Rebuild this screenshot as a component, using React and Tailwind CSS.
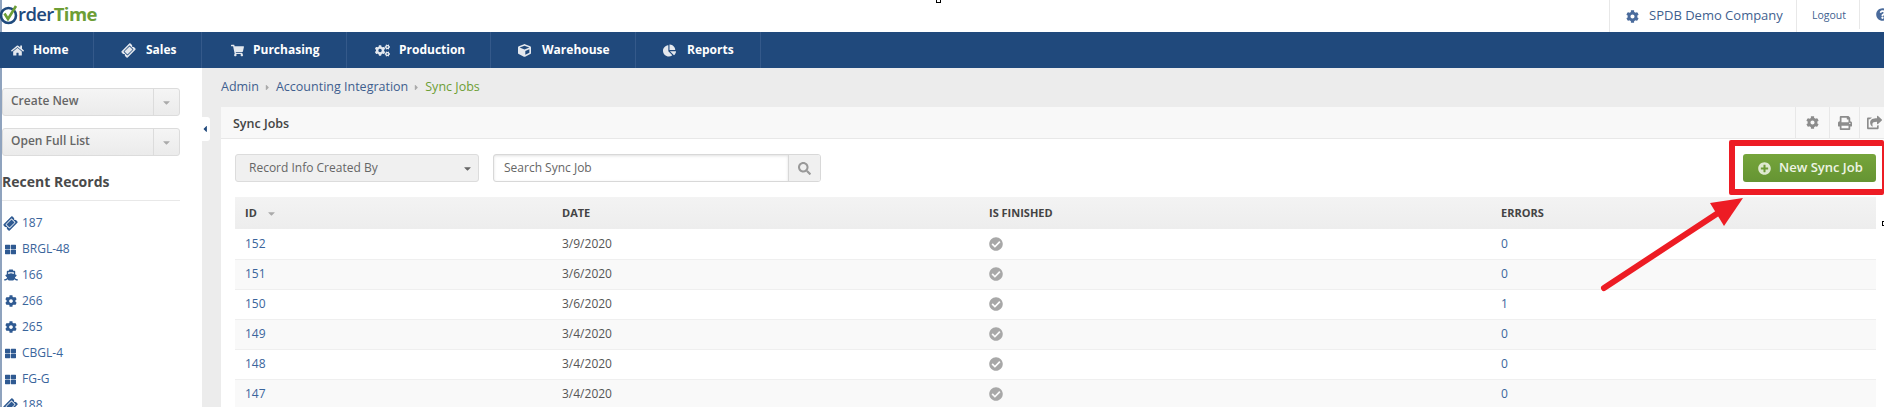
import {
  FaHome, FaTicketAlt, FaShoppingCart, FaCogs, FaCube, FaChartPie, FaCog, FaPrint,
  FaShareSquare, FaSearch, FaPlusCircle, FaCheckCircle, FaShip, FaThLarge, FaQuestionCircle,
  FaCaretDown, FaCaretRight, FaCaretLeft,
} from "react-icons/fa";

const TiltedTicket = ({ className }) => <FaTicketAlt size={13} className={`-rotate-45 ${className}`} />;
const Grid = ({ className }) => <FaThLarge size={11} className={className} />;
const Ship = ({ className }) => <FaShip size={14} className={className} />;

const NAV = [
  { label: "Home", icon: FaHome, size: 13, width: "w-[94px]", pad: "pl-[11px]", gap: "gap-[9px]" },
  { label: "Sales", icon: FaTicketAlt, size: 13, tilt: true, width: "w-[108px]", pad: "pl-[28px]", gap: "gap-[11px]" },
  { label: "Purchasing", icon: FaShoppingCart, size: 13, width: "w-[145px]", pad: "pl-[29px]", gap: "gap-[9px]" },
  { label: "Production", icon: FaCogs, size: 15, width: "w-[144px]", pad: "pl-[28px]", gap: "gap-[9px]" },
  { label: "Warehouse", icon: FaCube, size: 13, width: "w-[145px]", pad: "pl-[27px]", gap: "gap-[11px]" },
  { label: "Reports", icon: FaChartPie, size: 13, width: "w-[125px]", pad: "pl-[27px]", gap: "gap-[11px]" },
];

const RECENT = [
  { label: "187", icon: TiltedTicket },
  { label: "BRGL-48", icon: Grid },
  { label: "166", icon: Ship },
  { label: "266", icon: FaCog },
  { label: "265", icon: FaCog },
  { label: "CBGL-4", icon: Grid },
  { label: "FG-G", icon: Grid },
  { label: "188", icon: TiltedTicket },
];

const JOBS = [
  { id: 152, date: "3/9/2020", errors: 0 },
  { id: 151, date: "3/6/2020", errors: 0 },
  { id: 150, date: "3/6/2020", errors: 1 },
  { id: 149, date: "3/4/2020", errors: 0 },
  { id: 148, date: "3/4/2020", errors: 0 },
  { id: 147, date: "3/4/2020", errors: 0 },
];

const SideButton = ({ label }) => (
  <div className="flex h-7 w-[178px] items-center rounded-[3px] border border-[#dcdcdc] bg-gradient-to-b from-[#f5f5f5] to-[#ebebeb]">
    <span className="flex-1 pb-[2px] pl-2 text-[12px] font-semibold text-[#666]">{label}</span>
    <span className="flex h-full w-[26px] items-center justify-center border-l border-[#dcdcdc] text-[#aaa]">
      <FaCaretDown size={11} />
    </span>
  </div>
);

const App = () => {
  return (
    <div className="relative h-[407px] w-[1884px] overflow-hidden bg-white font-['Open_Sans',sans-serif]">
      {/* Top bar */}
      <div className="flex h-8 items-start border-l-2 border-[#8fa3be]">
        <div className="flex h-[28px] items-center">
          <svg width="19" height="24" viewBox="0 0 19 24" className="-ml-[2px] shrink-0">
            <circle cx="8.5" cy="13.5" r="7.5" fill="none" stroke="#1f4a7d" strokeWidth="2.6" />
            <path d="M4.5 11.5 L8 17 L16 4" fill="none" stroke="#6d9e35" strokeWidth="2.6" />
          </svg>
          <span className="-ml-[1px] text-[18.5px] leading-[24px] font-semibold tracking-[-0.6px] text-[#1f4a7d]">rder</span>
          <span className="text-[18.5px] leading-[24px] font-bold tracking-[-0.6px] text-[#6d9e35]">Time</span>
        </div>
        <div className="ml-auto flex h-8 items-stretch">
          <div className="flex w-[187px] items-center border-l border-[#e8e8e8] pl-[16px]">
            <FaCog size={13} className="text-[#4a6b9c]" />
            <span className="ml-[10px] text-[13px] text-[#3f5f8f]">SPDB Demo Company</span>
          </div>
          <div className="flex w-[63px] items-center border-l border-[#e8e8e8] pl-[15px] text-[10.5px] text-[#3f5f8f]">Logout</div>
          <div className="mb-[3px] flex w-[25px] items-center border-l border-[#e8e8e8] pl-[16px]">
            <FaQuestionCircle size={13} className="shrink-0 text-[#4a6b9c]" />
          </div>
        </div>
      </div>

      {/* Main nav */}
      <nav className="flex h-9 bg-[#20497c]">
        {NAV.map(({ label, icon: Icon, size, tilt, width, pad, gap }) => (
          <div key={label} className={`flex items-center border-r border-[#34598a] ${width} ${pad} ${gap}`}>
            <Icon size={size} className={`shrink-0 text-[#e4e8ee] ${tilt ? "-rotate-45" : ""}`} />
            <span className="text-[12px] font-bold text-white">{label}</span>
          </div>
        ))}
      </nav>

      <div className="flex h-[339px]">
        {/* Sidebar */}
        <aside className="w-[202px] shrink-0 border-l-2 border-[#8fa3be] pt-5">
          <div className="flex flex-col gap-3">
            <SideButton label="Create New" />
            <SideButton label="Open Full List" />
          </div>
          <h3 className="mt-4 w-[178px] border-b border-[#e8e8e8] pb-2 text-[14px] leading-[20px] font-bold text-[#4a4a4a]">
            Recent Records
          </h3>
          <ul className="mt-[9px]">
            {RECENT.map(({ label, icon: Icon }, i) => (
              <li key={i} className="flex h-[26px] items-center gap-[5px] pl-[2px] text-[12px] text-[#3a659c]">
                <span className="flex w-[13px] justify-center">
                  <Icon size={12} className="shrink-0 text-[#2f5a92]" />
                </span>
                {label}
              </li>
            ))}
          </ul>
        </aside>

        {/* Content */}
        <main className="relative flex-1 bg-[#ececec] pl-[19px]">
          <div className="absolute top-[49px] left-0 flex h-[24px] w-2 items-center rounded-r-[3px] bg-white">
            <FaCaretLeft size={10} className="-ml-[2px] text-[#20497c]" />
          </div>

          <div className="flex h-[39px] items-center gap-1 text-[12.5px] text-[#3f5f8f]">
            <span>Admin</span>
            <FaCaretRight size={9} className="text-[#aaa]" />
            <span>Accounting Integration</span>
            <FaCaretRight size={9} className="text-[#aaa]" />
            <span className="text-[#6d9e35]">Sync Jobs</span>
          </div>

          <section className="h-full bg-white">
            <header className="flex h-8 items-stretch border-b border-[#e8e8e8] bg-[#f8f8f8]">
              <h2 className="flex-1 pl-3 text-[12.5px] leading-[33px] font-semibold text-[#444]">Sync Jobs</h2>
              <div className="flex w-[34px] items-center justify-center border-l border-[#e8e8e8] text-[#8c8c8c]"><FaCog size={13} /></div>
              <div className="flex w-[30px] items-center justify-center border-l border-[#e8e8e8] text-[#8c8c8c]"><FaPrint size={14} /></div>
              <div className="flex w-[25px] items-center border-l border-[#e8e8e8] pl-[7px] text-[#8c8c8c]"><FaShareSquare size={15} className="shrink-0" /></div>
            </header>

            <div className="flex items-center pt-[15px] pr-2 pl-[14px]">
              <div className="flex h-7 w-[244px] items-center justify-between rounded-[3px] border border-[#dcdcdc] bg-[#f0f0f0] pr-[5px] pl-[13px] text-[12px] text-[#666]">
                Record Info Created By
                <FaCaretDown size={11} className="text-[#666]" />
              </div>
              <div className="ml-[14px] flex h-7 w-[328px] overflow-hidden rounded-[3px] border border-[#d8d8d8]">
                <div className="flex-1 pl-[10px] text-[12px] leading-[25px] text-[#666] shadow-[inset_0_1px_3px_rgba(0,0,0,0.12)]">Search Sync Job</div>
                <div className="flex w-[32px] items-center justify-center border-l border-[#d8d8d8] bg-[#f0f0f0] text-[#999]">
                  <FaSearch size={13} />
                </div>
              </div>
              <button className="ml-auto flex h-7 w-[133px] items-center rounded-[3px] bg-gradient-to-b from-[#76a53b] to-[#659433] pl-[15px] text-[13px] font-semibold text-[#eef4e4]">
                <FaPlusCircle size={13} className="mr-[8px] text-[#dfe9d0]" />
                New Sync Job
              </button>
            </div>

            <div className="mt-[15px] mr-2 ml-[14px]">
              <table className="w-full table-fixed border-collapse text-left text-[12px]">
                <colgroup>
                  <col className="w-[317px]" />
                  <col className="w-[427px]" />
                  <col className="w-[512px]" />
                  <col />
                </colgroup>
                <thead>
                  <tr className="h-8 bg-gradient-to-b from-[#f3f3f3] to-[#ededed] text-[11px] font-bold text-[#444]">
                    <th className="pl-[10px] font-bold">
                      <span className="flex items-center gap-[9px]">ID <FaCaretDown size={11} className="text-[#aaa]" /></span>
                    </th>
                    <th className="pl-[10px] font-bold">DATE</th>
                    <th className="pl-[10px] font-bold">IS FINISHED</th>
                    <th className="pl-[10px] font-bold">ERRORS</th>
                  </tr>
                </thead>
                <tbody>
                  {JOBS.map((job, i) => (
                    <tr key={job.id} className={`h-[30px] border-b border-[#efefef] ${i % 2 ? "bg-[#f9f9f9]" : "bg-white"}`}>
                      <td className="pl-[10px] text-[#3a659c]">{job.id}</td>
                      <td className="pl-[10px] text-[#555]">{job.date}</td>
                      <td className="pl-[10px]"><FaCheckCircle size={14} className="text-[#a8a8a8]" /></td>
                      <td className="pl-[10px] text-[#3a659c]">{job.errors}</td>
                    </tr>
                  ))}
                </tbody>
              </table>
            </div>
          </section>
        </main>
      </div>

      {/* Annotation drawn over the screenshot */}
      <div className="absolute top-[140px] left-[1729px] h-[55px] w-[155px] rounded-[2px] border-[6px] border-r-[2px] border-[#ed1c24]" />
      <svg className="absolute top-[190px] left-[1590px]" width="170" height="110" viewBox="0 0 170 110">
        <path d="M14 98 L128 23" stroke="#ed1c24" strokeWidth="6" strokeLinecap="round" />
        <path d="M153 8 L120 13 L134 36 Z" fill="#ed1c24" />
      </svg>
      {/* Small capture artefacts */}
      <div className="absolute top-0 left-[936px] h-[3px] w-[5px] border border-t-0 border-black" />
      <div className="absolute top-[221px] left-[1882px] h-[5px] w-[2px] border border-r-0 border-black" />
    </div>
  );
};

export default App;
